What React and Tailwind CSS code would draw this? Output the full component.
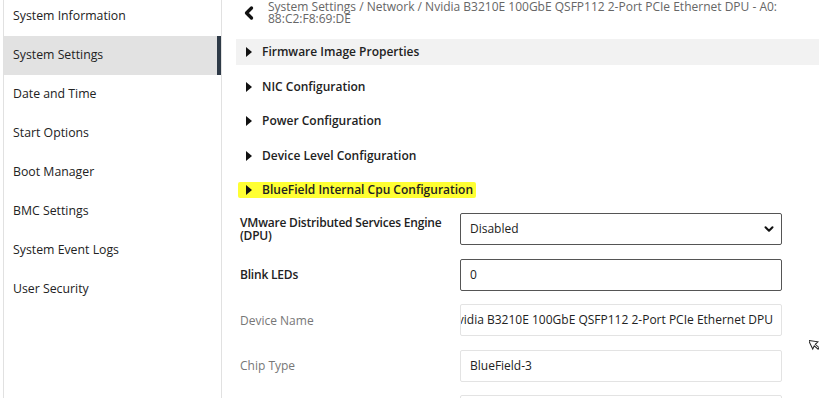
import { ChevronLeft, ChevronDown } from 'lucide-react'

const NAV = [
  'System Information',
  'System Settings',
  'Date and Time',
  'Start Options',
  'Boot Manager',
  'BMC Settings',
  'System Event Logs',
  'User Security',
]

const SECTIONS = [
  'Firmware Image Properties',
  'NIC Configuration',
  'Power Configuration',
  'Device Level Configuration',
  'BlueField Internal Cpu Configuration',
]

function Caret() {
  return (
    <svg width="6" height="10" viewBox="0 0 6 10" className="flex-shrink-0">
      <path d="M0 0 L6 5 L0 10 Z" fill="#111" />
    </svg>
  )
}

function Section({ label, index }) {
  const shaded = index === 0
  const marked = index === 4
  return (
    <div className={'flex items-center h-[26px] pl-[10px] ' + (shaded ? 'bg-[#f2f2f2]' : '')}>
      <div className={'flex items-center gap-[10px] pr-[3px] -ml-[8px] pl-[8px] ' + (marked ? 'bg-[#ffff33] h-[16px] rounded-[2px]' : '')}>
        <Caret />
        <span className="text-[12px] font-semibold text-[#222]">{label}</span>
      </div>
    </div>
  )
}

function Field({ label, strong, children }) {
  return (
    <div className="flex items-center">
      <div className={'w-[224px] pl-[4px] pr-[4px] text-[12px] leading-[13px] ' + (strong ? 'font-semibold text-[#222] tracking-[-0.2px]' : 'text-[#777]')}>
        {label}
      </div>
      {children}
    </div>
  )
}

export default function App() {
  return (
    <div className="relative w-[819px] h-[398px] overflow-hidden bg-white flex" style={{ fontFamily: '"Open Sans", "Noto Sans", sans-serif' }}>
      {/* Sidebar */}
      <aside className="ml-[3px] w-[219px] flex-shrink-0 border-l border-r border-[#e1e1e1]">
        <div className="-mt-[3px]">
          {NAV.map(item => {
            const active = item === 'System Settings'
            return (
              <div
                key={item}
                className={'h-[39px] flex items-center pl-[9px] text-[12.3px] text-[#222] ' + (active ? 'bg-[#e2e2e2] border-r-[4px] border-[#2e3a47]' : '')}
              >
                {item}
              </div>
            )
          })}
        </div>
      </aside>

      {/* Main */}
      <main className="flex-1 pl-[14px]">
        {/* Breadcrumb */}
        <div className="flex items-center -mt-[2px] h-[30px]">
          <ChevronLeft size={20} strokeWidth={4} className="ml-[3px] text-[#111]" />
          <div className="ml-[9px] w-[545px] text-[12px] leading-[12px] text-[#666]">
            System Settings / Network / Nvidia B3210E 100GbE QSFP112 2-Port PCIe Ethernet DPU - A0: 88:C2:F8:69:DE
          </div>
        </div>

        {/* Sections */}
        <div className="mt-[11px] flex flex-col gap-[8.5px]">
          {SECTIONS.map((s, i) => (
            <Section key={s} label={s} index={i} />
          ))}
        </div>

        {/* Form */}
        <div className="mt-[10px] flex flex-col gap-[13.5px]">
          <Field label="VMware Distributed Services Engine (DPU)" strong>
            <div className="w-[322px] h-[32px] border border-[#555] rounded-[2px] flex items-center justify-between pl-[9px] pr-[5px] text-[12px] text-[#222]">
              <span>Disabled</span>
              <ChevronDown size={14} strokeWidth={3.5} className="text-[#111]" />
            </div>
          </Field>
          <Field label="Blink LEDs" strong>
            <div className="w-[322px] h-[32px] border border-[#555] rounded-[2px] flex items-center px-[9px] text-[12px] text-[#222]">
              0
            </div>
          </Field>
          <Field label="Device Name">
            <div className="w-[322px] h-[32px] border border-[#e3e3e3] rounded-[2px] flex items-center justify-end pr-[8px] overflow-hidden whitespace-nowrap text-[12px] text-[#222]">
              <span className="flex-shrink-0">Nvidia B3210E 100GbE QSFP112 2-Port PCIe Ethernet DPU</span>
            </div>
          </Field>
          <Field label="Chip Type">
            <div className="w-[322px] h-[32px] border border-[#e3e3e3] rounded-[2px] flex items-center px-[9px] text-[12px] text-[#222]">
              BlueField-3
            </div>
          </Field>
          <Field label="">
            <div className="w-[322px] h-[32px] border border-[#e3e3e3] rounded-[2px]" />
          </Field>
        </div>
      </main>

      {/* Mouse pointer */}
      <svg className="absolute left-[809px] top-[337px]" width="12" height="16" viewBox="0 0 12 16">
        <path d="M1.5 1.5 L10 6 L6.5 7.5 L9 12 L7.5 13 L5 8.5 L2.5 11 Z" fill="white" stroke="#222" strokeWidth="1" transform="rotate(-20 6 8)" />
      </svg>
    </div>
  )
}
